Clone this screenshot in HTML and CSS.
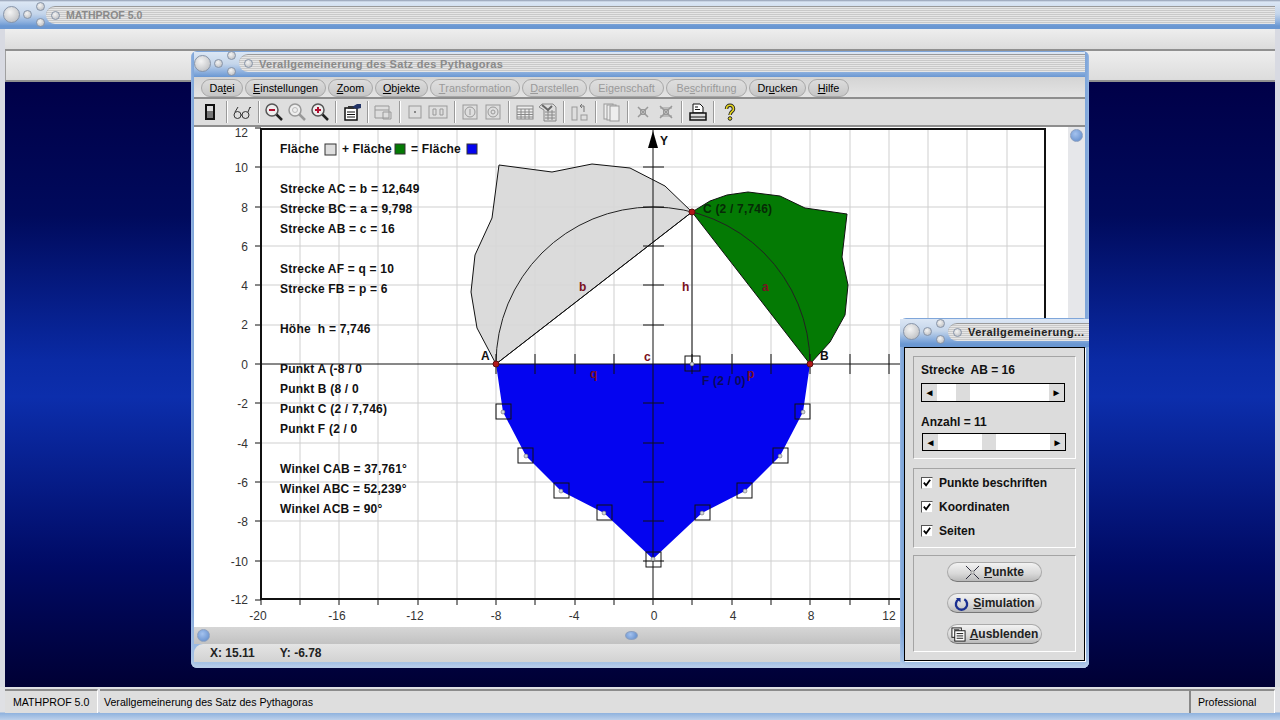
FILE: index.html
```html
<!DOCTYPE html>
<html lang="de">
<head>
    <meta charset="UTF-8">
    <title>MATHPROF 5.0</title>
    <link rel="stylesheet" href="styles.css">
</head>
<body>
<div class="app">
    <div class="app-title">
        <div class="orbs">
            <span class="orb orb-big"></span>
            <span class="orb orb-small"></span>
            <span class="orb-pair"><span class="orb orb-small"></span><span class="orb orb-small"></span></span>
        </div>
        <div class="title-strip"><span class="orb orb-small"></span><span class="title-text">MATHPROF 5.0</span></div>
    </div>

    <div class="workspace">
        <div class="band band-top"></div>
        <div class="band band-second"></div>
        <div class="desktop"></div>

        <!-- main child window -->
        <div class="window main-window">
            <div class="win-title">
                <div class="orbs">
                    <span class="orb orb-big"></span>
                    <span class="orb orb-small"></span>
                    <span class="orb-pair"><span class="orb orb-small"></span><span class="orb orb-small"></span></span>
                </div>
                <div class="title-strip"><span class="orb orb-small"></span><span class="title-text">Verallgemeinerung des Satz des Pythagoras</span></div>
            </div>

            <nav class="menu">
                <a class="pill w-datei">Da<u>t</u>ei</a>
                <a class="pill w-einst"><u>E</u>instellungen</a>
                <a class="pill w-zoom"><u>Z</u>oom</a>
                <a class="pill w-obj"><u>O</u>bjekte</a>
                <a class="pill off w-trans"><u>T</u>ransformation</a>
                <a class="pill off w-darst"><u>D</u>arstellen</a>
                <a class="pill off w-eig">Ei<u>g</u>enschaft</a>
                <a class="pill off w-besch">Be<u>s</u>chriftung</a>
                <a class="pill w-druck">Dr<u>u</u>cken</a>
                <a class="pill w-hilfe"><u>H</u>ilfe</a>
            </nav>

            <div class="toolbar">
                <span class="tool"><svg viewBox="0 0 20 20"><rect x="5" y="2" width="10" height="16" fill="#111"/><rect x="7" y="4" width="6" height="5" fill="#ddd"/><rect x="7" y="9" width="6" height="7" fill="#777"/></svg></span>
                <i class="sep"></i>
                <span class="tool"><svg viewBox="0 0 20 20" fill="none" stroke="#333"><circle cx="5.5" cy="13" r="3.5"/><circle cx="13.5" cy="13" r="3.5"/><path d="M9 13h1M3 10 6 5M16 10l2-5 1 1"/></svg></span>
                <i class="sep"></i>
                <span class="tool"><svg viewBox="0 0 20 20" fill="none"><path d="M12 12l6 6" stroke="#222" stroke-width="2.5"/><circle cx="8" cy="8" r="6" fill="#eee" stroke="#555" stroke-width="1.5"/><path d="M5 8h6" stroke="#b01030" stroke-width="2"/></svg></span>
                <span class="tool"><svg viewBox="0 0 20 20" fill="none"><path d="M12 12l6 6" stroke="#999" stroke-width="2.5"/><circle cx="8" cy="8" r="6" fill="#eee" stroke="#999" stroke-width="1.5"/><circle cx="8" cy="8" r="2.5" stroke="#bbb"/></svg></span>
                <span class="tool"><svg viewBox="0 0 20 20" fill="none"><path d="M12 12l6 6" stroke="#222" stroke-width="2.5"/><circle cx="8" cy="8" r="6" fill="#eee" stroke="#555" stroke-width="1.5"/><path d="M5 8h6M8 5v6" stroke="#b01030" stroke-width="2"/></svg></span>
                <i class="sep"></i>
                <span class="tool"><svg viewBox="0 0 20 20"><rect x="3" y="6" width="12" height="12" fill="#fff" stroke="#111" stroke-width="1.5"/><rect x="6" y="4" width="6" height="3" fill="#333"/><path d="M5 10h8M5 12.500h8M5 15h8" stroke="#111"/><path d="M10 5l5-3h4v4l-4 1z" fill="#223366"/></svg></span>
                <i class="sep"></i>
                <span class="tool"><svg viewBox="0 0 20 20" fill="none" stroke="#999"><path d="M2 4h14v12H2zM2 8h14"/><path d="M10 10h8v7h-8z"/></svg></span>
                <i class="sep"></i>
                <span class="tool"><svg viewBox="0 0 20 20" fill="none" stroke="#999"><rect x="4" y="4" width="12" height="12"/><path d="M9 10h2" stroke="#888" stroke-width="2"/></svg></span>
                <span class="tool"><svg viewBox="0 0 20 20" fill="none" stroke="#999"><rect x="1" y="4" width="18" height="12"/><path d="M5 7v6h3V7zM12 7v6h3V7z"/></svg></span>
                <i class="sep"></i>
                <span class="tool"><svg viewBox="0 0 20 20" fill="none" stroke="#999"><rect x="3" y="3" width="14" height="14"/><circle cx="10" cy="10" r="5"/><path d="M10 7v6"/></svg></span>
                <span class="tool"><svg viewBox="0 0 20 20" fill="none" stroke="#999"><rect x="3" y="3" width="14" height="14"/><circle cx="10" cy="10" r="5"/><circle cx="10" cy="10" r="2"/></svg></span>
                <i class="sep"></i>
                <span class="tool"><svg viewBox="0 0 20 20" fill="none" stroke="#888"><rect x="2" y="4" width="16" height="13" fill="#eee"/><path d="M2 7h16M2 10h16M2 12.500h16M2 15h16M6 7v10M10 7v10M14 7v10"/></svg></span>
                <span class="tool"><svg viewBox="0 0 20 20" fill="none" stroke="#888"><path d="M4 2h11l3 3v14H6V8L1 5z" fill="#ddd"/><path d="M7 10h10M7 13h10M7 16h10M10 8v10M14 8v10"/><path d="M4 3l6 5 4-4" stroke="#666" stroke-width="2"/></svg></span>
                <i class="sep"></i>
                <span class="tool"><svg viewBox="0 0 20 20" fill="none" stroke="#999"><rect x="3" y="5" width="5" height="13"/><rect x="12" y="13" width="6" height="5"/><path d="M15 10V4h-3M13 2l-2 2 2 2" stroke="#777"/></svg></span>
                <i class="sep"></i>
                <span class="tool"><svg viewBox="0 0 20 20" fill="#eee" stroke="#999"><rect x="3" y="2" width="9" height="15"/><rect x="6" y="3" width="9" height="15"/><rect x="9" y="4" width="9" height="15"/></svg></span>
                <i class="sep"></i>
                <span class="tool"><svg viewBox="0 0 20 20" fill="none" stroke="#999"><path d="M5 5l10 10M15 5 5 15" stroke-width="1.500"/><rect x="7.500" y="7.500" width="5" height="5"/></svg></span>
                <span class="tool"><svg viewBox="0 0 20 20" fill="none" stroke="#999"><path d="M4 4l12 12M16 4 4 16" stroke-width="1.500"/><path d="M4 6h12M4 14h12"/><rect x="7.500" y="7.500" width="5" height="5"/></svg></span>
                <i class="sep"></i>
                <span class="tool"><svg viewBox="0 0 20 20" fill="#fff" stroke="#111"><path d="M5 2h7l3 3v6H5z"/><path d="M7 5h3M7 7.500h5" /><rect x="2" y="11" width="16" height="7" fill="#ddd" stroke-width="1.500"/><path d="M2 15h16"/></svg></span>
                <i class="sep"></i>
                <span class="tool"><svg viewBox="0 0 20 20" fill="none"><path d="M6.500 7c0-5 7-5 7 0 0 3-3.500 2.500-3.500 6" stroke="#222" stroke-width="3.500"/><path d="M6.500 7c0-5 7-5 7 0 0 3-3.500 2.500-3.500 6" stroke="#e8d820" stroke-width="1.600"/><circle cx="10" cy="16.500" r="1.800" fill="#e8d820" stroke="#222"/></svg></span>
            </div>

            <div class="content">
                <svg class="plot" viewBox="194 127 874 500">
                    <path class="grid" d="M300 130V599M339 130V599M378 130V599M418 130V599M457 130V599M496 130V599M535 130V599M575 130V599M614 130V599M692 130V599M732 130V599M771 130V599M810 130V599M850 130V599M889 130V599M928 130V599M967 130V599M1007 130V599M262 167H1044M262 207H1044M262 246H1044M262 285H1044M262 325H1044M262 403H1044M262 443H1044M262 482H1044M262 521H1044M262 561H1044"/>

                    <!-- outer ticks -->
                    <path class="axis" d="M255 128H261M255 167H261M255 207H261M255 246H261M255 285H261M255 325H261M255 364H261M255 403H261M255 443H261M255 482H261M255 521H261M255 561H261M255 600H261M261 600V605M300 600V605M339 600V605M378 600V605M418 600V605M457 600V605M496 600V605M535 600V605M575 600V605M614 600V605M653 600V605M692 600V605M732 600V605M771 600V605M810 600V605M850 600V605M889 600V605"/>
                    <rect class="frame" x="261" y="129" width="784" height="470"/>

                    <!-- areas, the grey one lets the grid show faintly -->
                    <polygon class="area area-grey" fill="#d8d8d8" points="496,364 477,328 471,292 475,255 492,218 499,165 552,172 592,164 630,168 665,186 692,212"/>
                    <polygon class="area" fill="#047a04" points="692,212 710,201 727,195 748,192 780,196 805,208 847,214 842,257 848,285 845,315 830,342 810,364"/>
                    <polygon fill="#0404f0" points="496,364 503,412 526,456 561,491 604,513 653,559 702,513 745,491 780,456 803,412 810,364"/>

                    <path class="axis" d="M653 130V599M262 364H1044M692 212V364M496 364L692 212"/>
                    <path class="thin" d="M496 364A157 157 0 0 1 810 364"/>
                    <path class="axis" d="M643 167H664M643 207H664M643 246H664M643 285H664M643 325H664M643 403H664M643 443H664M643 482H664M643 521H664M643 561H664M496 354V374M535 354V374M575 354V374M614 354V374M692 354V374M732 354V374M771 354V374M810 354V374M850 354V374M889 354V374"/>
                    <polygon points="653,131 648,148 658,148" fill="#000"/>

                    <!-- point markers -->
                    <g class="marker">
                        <rect x="685" y="356" width="15" height="15"/>
                        <rect x="496" y="404" width="15" height="15"/>
                        <rect x="518" y="448" width="15" height="15"/>
                        <rect x="554" y="483" width="15" height="15"/>
                        <rect x="597" y="505" width="15" height="15"/>
                        <rect x="646" y="552" width="15" height="15"/>
                        <rect x="695" y="505" width="15" height="15"/>
                        <rect x="737" y="483" width="15" height="15"/>
                        <rect x="773" y="448" width="15" height="15"/>
                        <rect x="795" y="404" width="15" height="15"/>
                    </g>
                    <g class="dots">
                        <circle cx="692" cy="364" r="2"/>
                        <circle cx="503" cy="412" r="2"/>
                        <circle cx="526" cy="456" r="2"/>
                        <circle cx="561" cy="491" r="2"/>
                        <circle cx="604" cy="513" r="2"/>
                        <circle cx="653" cy="559" r="2"/>
                        <circle cx="702" cy="513" r="2"/>
                        <circle cx="745" cy="491" r="2"/>
                        <circle cx="780" cy="456" r="2"/>
                        <circle cx="803" cy="412" r="2"/>
                    </g>
                    <g class="red-points">
                        <circle cx="496" cy="364" r="3"/>
                        <circle cx="810" cy="364" r="3"/>
                        <circle cx="692" cy="212" r="3"/>
                    </g>

                    <!-- axis numbers -->
                    <g class="num end">
                        <text x="248" y="137">12</text>
                        <text x="248" y="172">10</text>
                        <text x="248" y="212">8</text>
                        <text x="248" y="251">6</text>
                        <text x="248" y="290">4</text>
                        <text x="248" y="329">2</text>
                        <text x="248" y="369">0</text>
                        <text x="248" y="408">-2</text>
                        <text x="248" y="448">-4</text>
                        <text x="248" y="487">-6</text>
                        <text x="248" y="526">-8</text>
                        <text x="248" y="566">-10</text>
                        <text x="248" y="604">-12</text>
                    </g>
                    <g class="num mid">
                        <text x="258" y="620">-20</text>
                        <text x="337" y="620">-16</text>
                        <text x="415" y="620">-12</text>
                        <text x="496" y="620">-8</text>
                        <text x="574" y="620">-4</text>
                        <text x="654" y="620">0</text>
                        <text x="733" y="620">4</text>
                        <text x="811" y="620">8</text>
                        <text x="889" y="620">12</text>
                    </g>

                    <!-- info text -->
                    <g class="info">
                        <text x="280" y="153">Fläche</text>
                        <text x="342" y="153">+ Fläche</text>
                        <text x="411" y="153">= Fläche</text>
                        <text x="280" y="193">Strecke AC = b = 12,649</text>
                        <text x="280" y="213">Strecke BC = a = 9,798</text>
                        <text x="280" y="233">Strecke AB = c = 16</text>
                        <text x="280" y="273">Strecke AF = q = 10</text>
                        <text x="280" y="293">Strecke FB = p = 6</text>
                        <text x="280" y="333">Höhe  h = 7,746</text>
                        <text x="280" y="373">Punkt A (-8 / 0</text>
                        <text x="280" y="393">Punkt B (8 / 0</text>
                        <text x="280" y="413">Punkt C (2 / 7,746)</text>
                        <text x="280" y="433">Punkt F (2 / 0</text>
                        <text x="280" y="473">Winkel CAB = 37,761°</text>
                        <text x="280" y="493">Winkel ABC = 52,239°</text>
                        <text x="280" y="513">Winkel ACB = 90°</text>
                        <text x="660" y="145">Y</text>
                        <text x="481" y="360">A</text>
                        <text x="820" y="360">B</text>
                        <text class="on-green" x="703" y="213">C (2 / 7,746)</text>
                        <text class="on-blue" x="702" y="385">F (2 / 0)</text>
                    </g>
                    <rect class="swatch" x="325" y="144" width="11" height="11" fill="#dedede"/>
                    <rect class="swatch" x="395" y="144" width="10" height="10" fill="#047a04"/>
                    <rect class="swatch" x="467" y="144" width="10" height="10" fill="#0404f0"/>
                    <g class="side">
                        <text x="579" y="291">b</text>
                        <text x="682" y="291">h</text>
                        <text x="762" y="291">a</text>
                        <text x="644" y="361">c</text>
                        <text x="590" y="378">q</text>
                        <text x="747" y="378">p</text>
                    </g>
                </svg>
                <div class="vscroll"><span class="knob"></span></div>
            </div>

            <div class="hscroll"><span class="knob"></span><span class="knob knob-mid"></span></div>
            <div class="win-status"><span class="coord">X: 15.11</span><span class="coord">Y: -6.78</span></div>
        </div>

        <!-- small control window -->
        <div class="window side-window">
            <div class="win-title">
                <div class="orbs">
                    <span class="orb orb-big"></span>
                    <span class="orb orb-small"></span>
                    <span class="orb-pair"><span class="orb orb-small"></span><span class="orb orb-small"></span></span>
                </div>
                <div class="title-strip active"><span class="orb orb-small"></span><span class="title-text">Verallgemeinerung...</span></div>
            </div>
            <div class="side-body">
                <div class="group group-sliders">
                    <div class="lbl">Strecke  AB = 16</div>
                    <div class="slider"><span class="arrow">◄</span><span class="thumb" style="margin-left:19px"></span><span class="arrow arrow-r">►</span></div>
                    <div class="lbl lbl-second">Anzahl = 11</div>
                    <div class="slider slider-second"><span class="arrow">◄</span><span class="thumb" style="margin-left:44px"></span><span class="arrow arrow-r">►</span></div>
                </div>
                <div class="group group-checks">
                    <label class="check"><span class="box"><svg viewBox="0 0 11 11"><path d="M2 5l2.500 3L9 2" fill="none" stroke="#000" stroke-width="2"/></svg></span>Punkte beschriften</label>
                    <label class="check"><span class="box"><svg viewBox="0 0 11 11"><path d="M2 5l2.500 3L9 2" fill="none" stroke="#000" stroke-width="2"/></svg></span>Koordinaten</label>
                    <label class="check"><span class="box"><svg viewBox="0 0 11 11"><path d="M2 5l2.500 3L9 2" fill="none" stroke="#000" stroke-width="2"/></svg></span>Seiten</label>
                </div>
                <div class="group group-buttons">
                    <button class="btn"><svg viewBox="0 0 16 16" fill="none" stroke="#223" ><path d="M1 1l5.500 5.500M15 1 9.500 6.500M1 15l5.500-5.500M15 15 9.500 9.500"/><rect x="6.500" y="6.500" width="3" height="3" stroke="#999"/></svg><span><u>P</u>unkte</span></button>
                    <button class="btn"><svg viewBox="0 0 16 16" fill="none"><path d="M5 3.500a6 6 0 1 0 6 0" stroke="#1a2f90" stroke-width="2.500"/><path d="M2 2h5v5z" fill="#1a2f90"/></svg><span><u>S</u>imulation</span></button>
                    <button class="btn"><svg viewBox="0 0 16 16" fill="#fff" stroke="#111"><rect x="1" y="1" width="10" height="10"/><rect x="4" y="4" width="11" height="11"/><path d="M6 7h7M6 9.500h7M6 12h7M3 3h6"/></svg><span><u>A</u>usblenden</span></button>
                </div>
            </div>
        </div>
    </div>

    <footer class="status-bar">
        <span class="cell cell-name">MATHPROF 5.0</span>
        <span class="cell cell-msg">Verallgemeinerung des Satz des Pythagoras</span>
        <span class="cell cell-edition">Professional</span>
    </footer>
</div>
</body>
</html>
```

FILE: styles.css
```css
html,
body {
    margin: 0;
    height: 100%;
    overflow: hidden;
    font-family: "Liberation Sans", Arial, sans-serif;
    font-size: 12px;
    color: #000;
}
.app {
    width: 1280px;
    height: 720px;
    display: flex;
    flex-direction: column;
    background: #dfe0e4;
}

/* title bars */
.app-title {
    height: 29px;
    display: flex;
    align-items: center;
    padding: 0 5px 0 3px;
    box-sizing: border-box;
    background: linear-gradient(#8f9bb0 0, #dbe6f4 2px, #c4d5ea 14px, #8db0de 22px, #6a97d2 26px, #6a97d2 29px);
}
.app-title .title-strip {
    margin-left: 1px;
}
.app-title .title-text {
    font-size: 10.5px;
    letter-spacing: 0;
}
.win-title {
    height: 25px;
    display: flex;
    align-items: center;
    padding: 0 0 3px 0;
    box-sizing: border-box;
    background: linear-gradient(#dce7f5 0, #c4d5ea 12px, #8db0de 20px, #6a97d2 25px);
}
.orbs {
    display: flex;
    align-items: center;
    gap: 3px;
}
.orb {
    display: block;
    border-radius: 50%;
    box-sizing: border-box;
    border: 1px solid #8794a8;
    background: radial-gradient(circle at 40% 35%, #f4f4f4, #b4b6ba);
}
.orb-big {
    width: 17px;
    height: 17px;
}
.orb-small {
    width: 9px;
    height: 9px;
}
.orb-pair {
    display: flex;
    flex-direction: column;
    gap: 7px;
    margin-left: 1px;
}
.title-strip {
    flex: 1;
    height: 18px;
    margin-left: 3px;
    padding-left: 5px;
    display: flex;
    align-items: center;
    gap: 6px;
    border-radius: 9px 0 0 9px;
    border-top: 1px solid #9a9a9a;
    box-sizing: border-box;
    background: repeating-linear-gradient(#e6e6e6 0, #e6e6e6 1px, #c9c9c9 1px, #c9c9c9 2px);
}
.title-text {
    font-weight: bold;
    font-size: 11px;
    letter-spacing: .32px;
    color: #8a8a8a;
    white-space: nowrap;
}
.title-strip.active .title-text {
    color: #222;
    letter-spacing: .45px;
}

/* desktop */
.workspace {
    flex: 1;
    position: relative;
    display: flex;
    flex-direction: column;
    padding: 0 5px;
    background: #d8dae2;
}
.band {
    background: linear-gradient(#eeeeee, #dcdcdc);
    border-bottom: 2px solid #909090;
}
.band-top {
    height: 20px;
}
.band-second {
    height: 29px;
    border-left: 1px solid #a0a0a0;
}
.desktop {
    flex: 1;
    background: linear-gradient(#000048 0, #000a5c 22%, #0a2aa4 46%, #0c2eac 52%, #000a64 80%, #000034 100%);
}
.status-bar {
    height: 33px;
    box-sizing: border-box;
    padding: 2px 5px 7px;
    display: flex;
    background: linear-gradient(#dfe0e4 0, #dfe0e4 25px, #8fb2de 26px, #bcd0ea 33px);
}
.cell {
    display: flex;
    align-items: center;
    box-sizing: border-box;
    background: #dedede;
    border-top: 2px solid #8c8c8c;
    border-right: 1px solid #fff;
    font-size: 10.6px;
    white-space: nowrap;
}
.cell-name {
    width: 93px;
    padding-left: 8px;
    margin-right: 2px;
}
.cell-msg {
    flex: 1;
    padding-left: 4px;
    border-right: 2px solid #888;
}
.cell-edition {
    width: 84px;
    padding-left: 7px;
}

/* child windows */
.window {
    position: absolute;
    box-sizing: border-box;
    border-radius: 6px;
    background: linear-gradient(#7fa6da, #7fa6da 90%, #a9c4e6);
    box-shadow: inset 0 -3px 3px #b8cdea;
}
.main-window {
    left: 191px;
    top: 22px;
    width: 898px;
    height: 617px;
    padding: 1px 4px 6px 3px;
    display: flex;
    flex-direction: column;
}
.side-window {
    left: 900px;
    top: 289px;
    width: 189px;
    height: 350px;
    padding: 1px 4px 8px 4px;
    z-index: 2;
    display: flex;
    flex-direction: column;
}
.side-window .win-title {
    height: 28px;
    margin: 0 -4px;
    padding-left: 3px;
}
.menu {
    height: 22px;
    box-sizing: border-box;
    padding: 2px 0 0 7px;
    display: flex;
    gap: 2px;
    background: linear-gradient(#d4d4d4, #e4e4e4);
    border-bottom: 2px solid #8e8e8e;
}
.pill {
    height: 18px;
    box-sizing: border-box;
    display: flex;
    align-items: center;
    justify-content: center;
    border-radius: 9px;
    border: 1px solid #a8a8a8;
    background: linear-gradient(#dcdcdc, #c6c6c6);
    font-size: 10.8px;
    white-space: nowrap;
}
.pill.off {
    color: #9a9a9a;
    background: linear-gradient(#dedede, #d0d0d0);
}
.w-datei { width: 42px; }
.w-einst { width: 81px; }
.w-zoom { width: 45px; }
.w-obj { width: 53px; }
.w-trans { width: 90px; }
.w-darst { width: 65px; }
.w-eig { width: 75px; }
.w-besch { width: 81px; }
.w-druck { width: 57px; }
.w-hilfe { width: 41px; }

.toolbar {
    height: 28px;
    box-sizing: border-box;
    padding-left: 5px;
    display: flex;
    align-items: center;
    background: #dedede;
    border-bottom: 2px solid #8e8e8e;
}
.tool {
    width: 22.85px;
    height: 20px;
    display: flex;
    justify-content: center;
}
.tool svg {
    width: 20px;
    height: 20px;
}
.sep {
    width: 1px;
    height: 22px;
    margin: 0 4px;
    background: #9a9a9a;
    box-shadow: 1px 0 0 #fff;
}

/* plot */
.content {
    height: 500px;
    display: flex;
    background: #fff;
}
.plot {
    width: 874px;
    height: 500px;
    display: block;
}
.grid {
    fill: none;
    stroke: #cfcfcf;
    stroke-width: 1;
}
.frame {
    fill: none;
    stroke: #111;
    stroke-width: 2;
}
.axis {
    fill: none;
    stroke: #111;
    stroke-width: 1;
}
.thin {
    fill: none;
    stroke: #222;
    stroke-width: 1;
}
.area {
    stroke: #111;
    stroke-width: 1;
}
.area-grey {
    fill-opacity: .92;
}
.marker rect {
    fill: none;
    stroke: #111;
}
.dots circle {
    fill: #cfd4d8;
    stroke: #555;
    stroke-width: .5;
}
.red-points circle {
    fill: #b01818;
    stroke: #601010;
}
.swatch {
    stroke: #333;
    stroke-width: 1;
}
.num text {
    font-size: 12px;
    fill: #333;
}
.num.end text {
    text-anchor: end;
}
.num.mid text {
    text-anchor: middle;
}
.info text {
    font-size: 12px;
    font-weight: bold;
    letter-spacing: .2px;
    fill: #111;
    white-space: pre;
}
.info .on-green {
    fill: #062a06;
}
.info .on-blue {
    fill: #0a0a60;
}
.side text {
    font-size: 12px;
    font-weight: bold;
    fill: #7a1020;
}

/* scrollbars */
.vscroll {
    width: 17px;
    padding-top: 2px;
    box-sizing: border-box;
    background: #e6e7ea;
    display: flex;
    justify-content: center;
}
.hscroll {
    height: 17px;
    display: flex;
    align-items: center;
    padding-left: 3px;
    background: linear-gradient(#d6d6d6, #c2c2c2);
}
.knob {
    width: 13px;
    height: 13px;
    border-radius: 50%;
    box-sizing: border-box;
    border: 1px solid #8ca0c0;
    background: radial-gradient(circle at 40% 35%, #a4c2ee, #5c88c8);
}
.knob-mid {
    margin-left: 415px;
    width: 13px;
    height: 9px;
}
.win-status {
    height: 18px;
    display: flex;
    align-items: center;
    gap: 25px;
    padding-left: 16px;
    font-weight: bold;
    font-size: 12px;
    background: linear-gradient(#e4e4e4, #d2d2d2);
    border-radius: 9px 0 0 0;
    color: #222;
}

/* control window body */
.side-body {
    height: 314px;
    box-sizing: border-box;
    padding: 8px;
    display: flex;
    flex-direction: column;
    background: #dcdcdc;
    border: 1px solid #000;
    box-shadow: 1px 1px 0 #fff;
}
.group {
    box-sizing: border-box;
    border: 1px solid #fff;
    border-top-color: #a4a4a4;
    border-left-color: #a4a4a4;
}
.group-sliders {
    height: 103px;
    padding: 5px 0 0 7px;
}
.lbl {
    height: 16px;
    line-height: 16px;
    font-weight: bold;
    font-size: 12px;
    color: #111;
    white-space: pre;
}
.lbl-second {
    margin-top: 12px;
}
.slider {
    width: 144px;
    height: 19px;
    margin-top: 5px;
    box-sizing: border-box;
    border: 1px solid #000;
    background: #fff;
    display: flex;
}
.slider-second {
    margin: 3px 0 0 1px;
    height: 18px;
}
.arrow {
    width: 15px;
    background: #dcdcdc;
    font-size: 10px;
    display: flex;
    align-items: center;
    justify-content: center;
}
.arrow-r {
    margin-left: auto;
}
.thumb {
    width: 14px;
    background: #dcdcdc;
}
.group-checks {
    height: 80px;
    margin-top: 9px;
    padding: 2px 0 0 7px;
}
.check {
    height: 24px;
    display: flex;
    align-items: center;
    gap: 6px;
    font-weight: bold;
    font-size: 12px;
    color: #111;
}
.box {
    width: 12px;
    height: 12px;
    box-sizing: border-box;
    background: #fff;
    border: 1px solid #555;
    border-right-color: #ddd;
    border-bottom-color: #ddd;
    display: flex;
}
.box svg {
    width: 10px;
    height: 10px;
}
.group-buttons {
    height: 97px;
    margin-top: 7px;
    padding-top: 6px;
    display: flex;
    flex-direction: column;
    align-items: center;
    gap: 11px;
}
.btn {
    width: 95px;
    height: 20px;
    padding: 0;
    display: flex;
    align-items: center;
    justify-content: center;
    gap: 4px;
    border: 1px solid #aaa;
    border-bottom-color: #777;
    border-radius: 10px;
    background: linear-gradient(#f2f2f2, #d8d8d8 60%, #b8b8b8);
    font-family: inherit;
    font-weight: bold;
    font-size: 12px;
    color: #222;
}
.btn svg {
    width: 15px;
    height: 15px;
}
```
